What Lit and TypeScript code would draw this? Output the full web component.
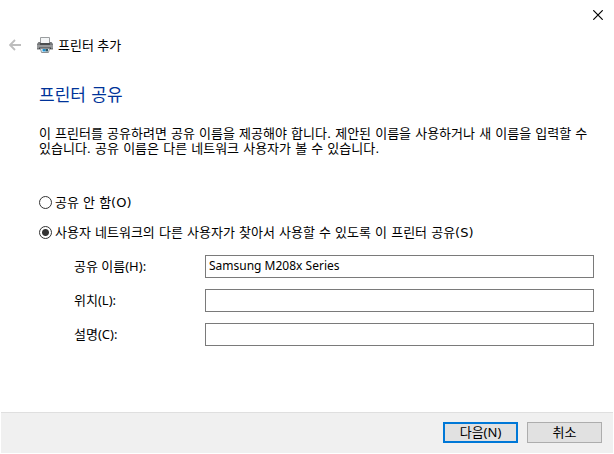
import { LitElement, html, css } from "lit";
import { customElement, state } from "lit/decorators.js";

@customElement("app-root")
export class AppRoot extends LitElement {
  static styles = css`
    :host {
      display: flex;
      flex-direction: column;
      box-sizing: border-box;
      min-height: 100vh;
      padding: 0 1px 1px;
      background: #fff;
      color: #000;
      font: 13px/15px "Noto Sans", "Noto Sans CJK KR", sans-serif;
      word-break: keep-all;
    }
    button,
    input {
      font: inherit;
      color: inherit;
      box-sizing: border-box;
    }
    .titlebar {
      display: flex;
      justify-content: flex-end;
      padding: 4px 4px 0 0;
    }
    .icon-button {
      display: grid;
      place-items: center;
      width: 22px;
      height: 22px;
      padding: 0;
      border: 0;
      background: none;
    }
    .header {
      display: flex;
      align-items: center;
      padding: 8px 3px 0;
    }
    .printer {
      margin: 0 5px 0 11px;
    }
    .content {
      flex: 1;
      padding: 0 19px 24px 38px;
    }
    h1,
    p,
    .choice {
      font-family: "DejaVu Sans", "Noto Sans CJK KR", sans-serif;
    }
    h1 {
      margin: 27px 0 0;
      color: #003399;
      font-size: 17px;
      line-height: 24px;
      font-weight: 400;
    }
    p {
      margin: 19px 0 39px;
    }
    .choice {
      display: flex;
      align-items: center;
      gap: 3px;
      margin-bottom: 15px;
    }
    .choice input {
      appearance: none;
      flex: none;
      width: 13px;
      height: 13px;
      margin: 0;
      border: 1px solid #333;
      border-radius: 50%;
      background: #fff;
    }
    .choice input:checked {
      background: radial-gradient(circle, #333 3px, #fff 4px);
    }
    .fields {
      display: grid;
      grid-template-columns: 131px 1fr;
      row-gap: 11px;
      align-items: center;
      padding-left: 35px;
    }
    .fields input {
      width: 100%;
      height: 23px;
      padding: 0 3px 2px;
      border: 1px solid #7a7a7a;
      border-radius: 0;
      background: #fff;
      outline: 0;
      font-size: 12px;
    }
    .footer {
      display: flex;
      justify-content: flex-end;
      gap: 9px;
      padding: 9px 11px 10px;
      border-top: 1px solid #dfdfdf;
      background: #f0f0f0;
    }
    .action {
      width: 75px;
      height: 21px;
      padding: 0;
      border: 1px solid #adadad;
      background: #e1e1e1;
    }
    .action.primary {
      border: 2px solid #0078d7;
    }
  `;

  @state() private shared = true;

  render() {
    return html`
      <div class="titlebar">
        <button class="icon-button" aria-label="닫기">
          <svg width="10" height="10" viewBox="0 0 10 10" stroke="#000" stroke-width="1.2">
            <path d="M.3.3l9.4 9.4M9.7.3L.3 9.700" />
          </svg>
        </button>
      </div>
      <header class="header">
        <button class="icon-button" aria-label="뒤로">
          <svg width="12" height="12" viewBox="0 0 12 12" fill="none" stroke="#bdbdbd" stroke-width="1.800">
            <path d="M12 6H1M6 1L1 6l5 5" />
          </svg>
        </button>
        <svg class="printer" width="16" height="16" viewBox="0 0 16 16" aria-hidden="true">
          <path d="M3.500 .5h9v6h-9z" fill="#f4f6f7" stroke="#9a9d9f" />
          <path d="M1.500 5h2v2h9V5h2L16 7v5.500H0V7z" fill="#77797b" />
          <path d="M0 8h16v3H0z" fill="#97999b" />
          <path d="M3 6h10v2H3z" fill="#4b4e50" />
          <path d="M2 10.500h12v1.500H2z" fill="#3f4244" />
          <path d="M3.500 11.500h9l-1 4h-7z" fill="#fff" stroke="#8b8f92" />
          <path d="M5.500 12h3v2.500h-3z" fill="#1b91d4" />
          <path d="M8.500 12H11v2.500H8.500z" fill="#2b5563" />
        </svg>
        <span>프린터 추가</span>
      </header>
      <main class="content">
        <h1>프린터 공유</h1>
        <p>
          이 프린터를 공유하려면 공유 이름을 제공해야 합니다. 제안된 이름을 사용하거나 새 이름을 입력할 수 있습니다. 공유
          이름은 다른 네트워크 사용자가 볼 수 있습니다.
        </p>
        <label class="choice">
          <input type="radio" name="share" .checked=${!this.shared} @change=${() => (this.shared = false)} />
          <span>공유 안 함(O)</span>
        </label>
        <label class="choice">
          <input type="radio" name="share" .checked=${this.shared} @change=${() => (this.shared = true)} />
          <span>사용자 네트워크의 다른 사용자가 찾아서 사용할 수 있도록 이 프린터 공유(S)</span>
        </label>
        <div class="fields">
          <label for="name">공유 이름(H):</label>
          <input id="name" type="text" value="Samsung M208x Series" ?disabled=${!this.shared} />
          <label for="location">위치(L):</label>
          <input id="location" type="text" ?disabled=${!this.shared} />
          <label for="comment">설명(C):</label>
          <input id="comment" type="text" ?disabled=${!this.shared} />
        </div>
      </main>
      <footer class="footer">
        <button class="action primary">다음(N)</button>
        <button class="action">취소</button>
      </footer>
    `;
  }
}
